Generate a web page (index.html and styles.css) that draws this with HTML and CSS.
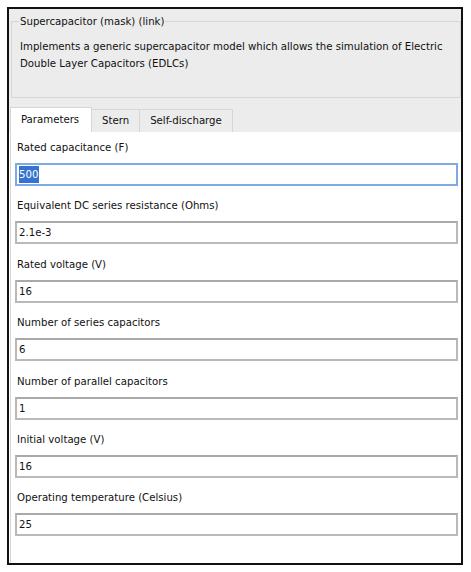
FILE: index.html
```html
<!DOCTYPE html>
<html>
<head>
<meta charset="utf-8">
<link rel="stylesheet" href="styles.css">
</head>
<body>
<div class="dialog">
  <div class="header">
    <fieldset class="desc">
      <legend class="legend">Supercapacitor (mask) (link)</legend>
      <p class="desc-text">Implements a generic supercapacitor model which allows the simulation of Electric Double Layer Capacitors (EDLCs)</p>
    </fieldset>
    <div class="tabs">
      <div class="tab active">Parameters</div>
      <div class="tab">Stern</div>
      <div class="tab">Self-discharge</div>
    </div>
  </div>
  <div class="panel">
    <div class="field">
      <div class="label">Rated capacitance (F)</div>
      <div class="input focused"><span class="sel">500</span></div>
    </div>
    <div class="field">
      <div class="label">Equivalent DC series resistance (Ohms)</div>
      <div class="input">2.1e-3</div>
    </div>
    <div class="field">
      <div class="label">Rated voltage (V)</div>
      <div class="input">16</div>
    </div>
    <div class="field">
      <div class="label">Number of series capacitors</div>
      <div class="input">6</div>
    </div>
    <div class="field">
      <div class="label">Number of parallel capacitors</div>
      <div class="input">1</div>
    </div>
    <div class="field">
      <div class="label">Initial voltage (V)</div>
      <div class="input">16</div>
    </div>
    <div class="field">
      <div class="label">Operating temperature (Celsius)</div>
      <div class="input">25</div>
    </div>
  </div>
</div>
</body>
</html>
```
FILE: styles.css
```css
html, body {
  margin: 0;
  padding: 0;
  background: #ffffff;
}
body {
  padding: 7px 0 0 7px;
  font-family: "DejaVu Sans Condensed", "DejaVu Sans", sans-serif;
  font-stretch: condensed;
  font-size: 11.3px;
  color: #111111;
}
.dialog {
  box-sizing: border-box;
  width: 456px;
  height: 558px;
  border: 2px solid #111111;
  display: flex;
  flex-direction: column;
  background: #ffffff;
}
.header {
  background: #ececec;
  padding-top: 5px;
  display: flex;
  flex-direction: column;
}
.desc {
  margin: 0 0 0 2px;
  padding: 0 8px 0 8px;
  border: 1px solid #d6d6d6;
  height: 84px;
  box-sizing: border-box;
}
.legend {
  padding: 0 1px;
  line-height: 15px;
  margin-left: -1px;
}
.desc-text {
  margin: 9px 0 0 0;
  line-height: 17px;
}
.tabs {
  display: flex;
  align-items: flex-end;
  height: 34px;
  padding-left: 1px;
}
.tab {
  box-sizing: border-box;
  height: 23px;
  padding: 0 10px;
  line-height: 22px;
  border: 1px solid #d6d6d6;
  border-bottom: none;
  border-left: none;
  background: #ececec;
}
.tab.active {
  height: 25px;
  background: #ffffff;
  border-left: 1px solid #d6d6d6;
  padding: 0 10px;
  width: 82px;
  line-height: 24px;
}
.panel {
  flex: 1;
  margin-left: 1px;
  border-left: 1px solid #d6d6d6;
  padding: 7px 3px 0 4px;
  display: flex;
  flex-direction: column;
}
.field {
  display: flex;
  flex-direction: column;
  height: 58.4px;
}
.label {
  line-height: 18px;
  padding-left: 2px;
}
.input {
  box-sizing: border-box;
  margin-top: 6px;
  height: 23px;
  border: 2px solid #b9b9b9;
  border-top-color: #a9a9a9;
  line-height: 19px;
  padding-left: 2px;
  background: #ffffff;
}
.input.focused {
  border-color: #7ea9e6;
}
.sel {
  background: #3474d0;
  color: #ffffff;
  display: inline-block;
  line-height: 17px;
  padding-right: 1px;
}
```
